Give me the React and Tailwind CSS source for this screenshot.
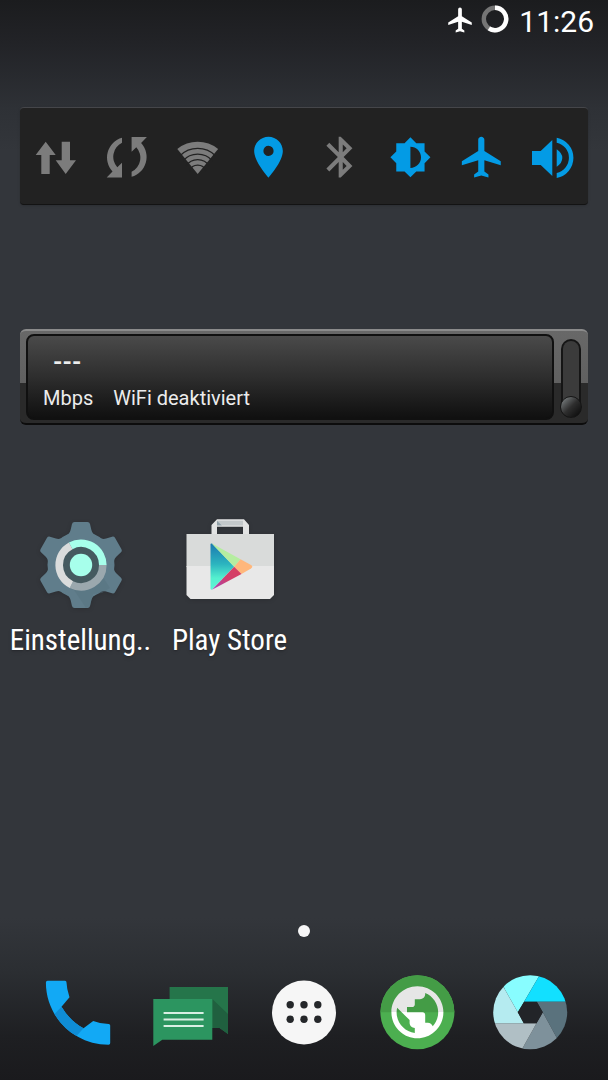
import React, { useState } from "react";

const PLANE =
  "M21 16v-2l-8-5V3.5c0-.83-.67-1.5-1.5-1.5S10 2.67 10 3.5V9l-8 5v2l8-2.5V19l-2 1.5V22l3.5-1 3.5 1v-1.5L13 19v-5.5l8 2.5z";

const SYNC_ARC = "M17 2.8A20.5 20.5 0 0 0 7.5 36.5L1.7 42.5H17V27.8L12.3 32.3A15.6 15.6 0 0 1 17 7.8z";

/* Power control toggles */
const toggles = [
  {
    id: "data",
    label: "Mobile Daten",
    on: false,
    viewBox: "0 0 43 43",
    art: <path d="M11.7 6.7L21.7 20H15.7V39H7.3V20H1.7zM27.7 6.7H36V25.3H42L31.7 39L21.7 25.3H27.7z" />,
  },
  {
    id: "sync",
    label: "Synchronisierung",
    on: false,
    viewBox: "0 0 43 43",
    art: (
      <>
        <path d={SYNC_ARC} />
        <path d={SYNC_ARC} transform="rotate(180 21.8 22.3)" />
      </>
    ),
  },
  {
    id: "wifi",
    label: "WiFi",
    on: false,
    viewBox: "0 0 43 43",
    art: (
      <>
        <path d="M21.7 39L1.3 14A32.3 32.3 0 0 1 42.1 14z" />
        <g fill="none" stroke="#222222" strokeWidth="1.3">
          <path d="M4 20.7A25.2 25.2 0 0 1 39.4 20.7" />
          <path d="M7 25.8A19.6 19.6 0 0 1 36.4 25.8" />
          <path d="M10 31A14 14 0 0 1 33.4 31" />
          <path d="M13.7 36A8.4 8.4 0 0 1 29.7 36" />
        </g>
      </>
    ),
  },
  {
    id: "location",
    label: "Standort",
    on: true,
    viewBox: "1.5 1.2 21 21",
    art: (
      <path d="M12 2C8.13 2 5 5.13 5 9c0 5.25 7 13 7 13s7-7.75 7-13c0-3.87-3.13-7-7-7zm0 9.5a2.5 2.5 0 1 1 0-5 2.5 2.5 0 0 1 0 5z" />
    ),
  },
  {
    id: "bluetooth",
    label: "Bluetooth",
    on: false,
    viewBox: "0.9 1.2 21 21",
    art: (
      <path d="M17.71 7.71L12 2h-1v7.59L6.41 5 5 6.41 10.59 12 5 17.59 6.41 19 11 14.41V22h1l5.71-5.71-4.3-4.29 4.3-4.29zM13 5.83l1.88 1.88L13 9.59V5.83zm1.88 10.46L13 18.17v-3.76l1.88 1.88z" />
    ),
  },
  {
    id: "brightness",
    label: "Helligkeit",
    on: true,
    viewBox: "-0.1 -0.6 24.3 24.3",
    art: (
      <path d="M20 15.31L23.31 12 20 8.69V4h-4.69L12 .69 8.69 4H4v4.69L.69 12 4 15.31V20h4.69L12 23.31 15.31 20H20v-4.69zM12 18V6c3.31 0 6 2.69 6 6s-2.69 6-6 6z" />
    ),
  },
  {
    id: "airplane",
    label: "Flugmodus",
    on: true,
    viewBox: "1.1 1.2 21 21",
    art: <path d={PLANE} />,
  },
  {
    id: "sound",
    label: "Ton",
    on: true,
    viewBox: "0 0 43 43",
    art: (
      <path d="M1 16H9.7L21.3 5V41L9.7 30H1zM25.7 14.3Q31.3 18 31.3 23Q31.3 28 25.7 31.7zM25.7 2.7A20.5 20.5 0 0 1 25.7 43V38A15.5 15.5 0 0 0 25.7 7.7z" />
    ),
  },
];

const StatusBar = () => (
  <header className="flex h-11 items-center justify-end pr-3.5 text-white">
    <svg viewBox="1 1.5 21 21" className="mr-2 mb-1 h-[26px] w-[26px]" fill="currentColor" aria-hidden="true">
      <path d={PLANE} />
    </svg>
    <svg viewBox="0 0 28 28" className="mr-2.5 mb-1.5 h-7 w-7" fill="none" strokeWidth="4.4" aria-hidden="true">
      <circle cx="14" cy="14" r="11.2" stroke="#757575" />
      <path d="M14 2.8A11.2 11.2 0 1 1 7.9 23.4" stroke="#ffffff" />
    </svg>
    <time className="text-[30px] leading-none">11:26</time>
  </header>
);

const PowerWidget = () => {
  const [active, setActive] = useState(toggles.filter((t) => t.on).map((t) => t.id));

  const toggle = (id) =>
    setActive((prev) => (prev.includes(id) ? prev.filter((x) => x !== id) : [...prev, id]));

  return (
    <section className="mx-5 mt-[63px] grid h-[98px] grid-cols-8 rounded-sm border-t border-b border-t-[#45464a] border-b-[#131313] bg-[#222222] shadow-sm">
      {toggles.map((t) => (
        <button
          key={t.id}
          type="button"
          aria-label={t.label}
          aria-pressed={active.includes(t.id)}
          onClick={() => toggle(t.id)}
          className={`flex items-center justify-center ${
            active.includes(t.id) ? "text-[#039be5]" : "text-[#7c7c7c]"
          }`}
        >
          <svg viewBox={t.viewBox} className="h-[43px] w-[43px]" fill="currentColor">
            {t.art}
          </svg>
        </button>
      ))}
    </section>
  );
};

const SpeedWidget = () => (
  <section className="mx-5 mt-[124px] flex h-24 rounded-md border-t-2 border-b-2 border-t-[#8b8b8b] border-b-[#0c0c0c] bg-linear-to-b from-[#686868] from-0% via-[#606060] via-57% to-[#2a2a2a] to-57% py-[3px] pr-[7px] pl-1.5">
    <div className="flex flex-1 flex-col justify-between rounded-lg border-2 border-[#101010] bg-linear-to-b from-[#4a4a4a] via-[#2e2e2e] to-[#101010] px-[15px] pt-3.5 pb-2 text-[#ececec]">
      <p className="px-2.5 text-2xl leading-6 font-bold">---</p>
      <p className="flex gap-5 text-xl leading-6">
        <span>Mbps</span>
        <span>WiFi deaktiviert</span>
      </p>
    </div>
    <div className="mt-[5px] mb-0.5 ml-[7px] flex w-5 flex-col justify-end rounded-full border-2 border-b-0 border-[#151515] bg-[#3b3b3b]">
      <button
        type="button"
        aria-label="Messung starten"
        className="-mx-[3px] h-[22px] rounded-full border border-[#151515] bg-linear-to-br from-[#8a9092] via-[#2e2e2e] to-[#080808]"
      />
    </div>
  </section>
);

const SettingsIcon = () => (
  <svg viewBox="0 -2 90 92" className="h-[92px] w-[90px] drop-shadow-sm">
    <g fill="#607d8b">
      <circle cx="45" cy="45" r="33.5" />
      {[0, 60, 120, 180, 240, 300].map((deg) => (
        <path
          key={deg}
          d="M28 17Q33.6 14.5 34.6 10L36 4Q36.5 2 38.5 2H51.5Q53.5 2 54 4L55.4 10Q56.4 14.5 62 17L45 40z"
          transform={`rotate(${deg} 45 45)`}
        />
      ))}
    </g>
    <path d="M57 68L67 57L74 68L66 73L57 74L54 86L50 88L36 67z" fill="#56707d" opacity="0.4" />
    <circle cx="45" cy="45" r="19" fill="#455a60" />
    <g fill="none" strokeWidth="7.6">
      <path d="M34.7 25.8A21.8 21.8 0 0 1 66.8 45" stroke="#a7ffeb" />
      <path d="M66.8 45A21.8 21.8 0 0 1 35.4 64.6" stroke="#9ba8ae" />
      <path d="M35.4 64.6A21.8 21.8 0 0 1 34.7 25.8" stroke="#dadcdc" />
    </g>
    <circle cx="45" cy="45" r="11.2" fill="#a7ffeb" />
  </svg>
);

const PlayStoreIcon = () => (
  <svg viewBox="0 -2 90 92" className="h-[92px] w-[90px] drop-shadow-sm">
    <defs>
      <linearGradient id="playTeal" x1="0" y1="0" x2="0" y2="1">
        <stop offset="0" stopColor="#1b78b0" />
        <stop offset="0.45" stopColor="#2cb5bf" />
        <stop offset="0.75" stopColor="#54f0cf" />
        <stop offset="1" stopColor="#5ef5d5" />
      </linearGradient>
      <linearGradient id="playRed" x1="0" y1="1" x2="1" y2="0">
        <stop offset="0" stopColor="#a044c0" />
        <stop offset="0.5" stopColor="#d23f6b" />
        <stop offset="1" stopColor="#d83f60" />
      </linearGradient>
    </defs>
    <path d="M26.5 14V5L32 -.7H59L64 5V14H58V6.7H32V14z" fill="#e2e3e3" />
    <path d="M32 .8H58V5.5H37z" fill="#c3c8ca" />
    <path d="M32 .8L37 5.5H32z" fill="#90a0a8" />
    <path d="M1.5 14H89V47H1.5z" fill="#d9dbda" />
    <path d="M1.5 46H89V75L85 79H5.5L1.5 75z" fill="#e8e8e8" />
    <path d="M25.5 24.5Q25.5 23 27 23.5L49.2 46.7L27 69.5Q25.5 70 25.5 68.5z" fill="url(#playTeal)" />
    <path d="M26.5 23.3L55.5 39.3L49.2 46.7z" fill="#b5eda0" />
    <path d="M55.5 39.3L66 45Q68.6 46.7 66 48.5L56.5 54L49.2 46.7z" fill="#ffb77c" />
    <path d="M49.2 46.7L56.5 54L27 69.8z" fill="url(#playRed)" />
  </svg>
);

const apps = [
  { name: "Einstellung..", icon: <SettingsIcon /> },
  { name: "Play Store", icon: <PlayStoreIcon /> },
];

const PhoneIcon = () => (
  <svg viewBox="0 0 76 76" className="h-[76px] w-[76px]">
    <path
      d="M8.5 5.7H26Q27.5 5.7 27.5 7.5Q27.7 14 30.5 22.3L22.5 31.7Q31 46 44.5 53.3L54.2 46Q61 48.8 69.7 49Q71.2 49 71.2 50.5V68Q71.2 69.7 69.5 69.7C35 69.7 6.9 42 6.9 7.5Q6.9 5.7 8.5 5.7z"
      fill="#12a9f5"
    />
    <path d="M22.5 31.7Q31 46 44.5 53.3L37.5 61.1Q24 53.5 15.6 39z" fill="#0f8dd6" />
  </svg>
);

const MessagesIcon = () => (
  <svg viewBox="0 0 76 76" className="h-[76px] w-[76px]">
    <path d="M17.6 12H76V59L67.6 53H17.6z" fill="#25754a" />
    <path d="M60.3 24L76 39V59L67.6 53H60.3z" fill="#20603f" />
    <path d="M1.3 24H60.3V64.7H10.3L1.3 71z" fill="#2c9560" />
    <path d="M11.6 38H51.6M11.6 44.4H51.6M11.6 51H51.6" stroke="#d9efe4" strokeWidth="2" />
  </svg>
);

const DrawerIcon = () => (
  <svg viewBox="0 0 76 76" className="h-[76px] w-[76px]">
    <circle cx="38" cy="37.5" r="32" fill="#f6f6f6" />
    {[29.7, 44.3].map((y) =>
      [24.2, 38, 51.8].map((x) => <circle key={`${x}-${y}`} cx={x} cy={y} r="3.7" fill="#25272a" />)
    )}
  </svg>
);

const BrowserIcon = () => (
  <svg viewBox="0 0 76 76" className="h-[76px] w-[76px]">
    <defs>
      <linearGradient id="globeHalf" x1="0" y1="0" x2="0" y2="1">
        <stop offset="0.5" stopColor="#e6e6e6" />
        <stop offset="0.5" stopColor="#ffffff" />
      </linearGradient>
    </defs>
    <circle cx="37.4" cy="37.3" r="37" fill="#4caf50" />
    <path d="M.4 37.3a37 37 0 0 1 74 0z" fill="#449c46" />
    <path
      transform="translate(6.2 6.1) scale(2.6)"
      fill="url(#globeHalf)"
      d="M12 2C6.48 2 2 6.48 2 12s4.48 10 10 10 10-4.48 10-10S17.52 2 12 2zm-1 17.93c-3.95-.49-7-3.85-7-7.93 0-.62.08-1.21.21-1.79L9 15v1c0 1.1.9 2 2 2v1.93zm6.9-2.54c-.26-.81-1-1.39-1.9-1.39h-1v-3c0-.55-.45-1-1-1H8v-2h2c.55 0 1-.45 1-1V7h2c1.1 0 2-.9 2-2v-.41c2.93 1.19 5 4.06 5 7.41 0 2.08-.8 3.97-2.1 5.39z"
    />
  </svg>
);

const CameraIcon = () => (
  <svg viewBox="0 0 76 76" className="h-[76px] w-[76px]">
    <defs>
      <clipPath id="lens">
        <circle cx="37.2" cy="37.3" r="37" />
      </clipPath>
    </defs>
    <g clipPath="url(#lens)">
      <path d="M24.8 37.3L11.8 14.3L6 0H46.7L31.1 26.7z" fill="#88fdff" />
      <path d="M31.1 26.7L46.7 0H76V26.7z" fill="#12e0ff" />
      <path d="M43.8 26.7H76V76H71L49.8 37.3z" fill="#5a727d" />
      <path d="M49.8 37.3L71 76H28L43.5 48.3z" fill="#7e919b" />
      <path d="M43.5 48.3L28 76H0V48.3z" fill="#b0bfc5" />
      <path d="M30.8 48.3H-1V0H3.7L24.8 37.3z" fill="#b5ebf0" />
    </g>
    <path d="M31.1 26.7H43.8L49.8 37.3L43.5 48.3H30.8L24.8 37.3z" fill="#222428" />
  </svg>
);

const dock = [
  { name: "Telefon", icon: <PhoneIcon /> },
  { name: "Nachrichten", icon: <MessagesIcon /> },
  { name: "Apps", icon: <DrawerIcon /> },
  { name: "Browser", icon: <BrowserIcon /> },
  { name: "Kamera", icon: <CameraIcon /> },
];

const App = () => {
  return (
    <div className="flex min-h-screen flex-col bg-[linear-gradient(to_bottom,#1b1c1e_0%,#222327_4%,#2e3136_10%,#33363b_14%,#33363b_85%,#2b2e32_90%,#1e1f22_96%,#1a1a1d_100%)] font-[Roboto,sans-serif]">
      <StatusBar />
      <main className="flex flex-1 flex-col">
        <PowerWidget />
        <SpeedWidget />

        {/* App shortcuts */}
        <div className="mt-[93px] grid grid-cols-4 px-1.5">
          {apps.map((app) => (
            <button key={app.name} type="button" className="flex flex-col items-center">
              {app.icon}
              <span className="mt-3 font-['Roboto_Condensed','Liberation_Sans_Narrow',Roboto,sans-serif] text-[29px] leading-9 whitespace-nowrap text-white text-shadow-md">
                {app.name}
              </span>
            </button>
          ))}
        </div>
      </main>

      <footer>
        {/* Page indicator */}
        <div className="mx-auto h-3 w-3 rounded-full bg-[#f6f6f6]" />
        <nav className="mt-[38px] mb-[29px] grid grid-cols-5 px-5">
          {dock.map((item) => (
            <button key={item.name} type="button" aria-label={item.name} className="flex justify-center">
              {item.icon}
            </button>
          ))}
        </nav>
      </footer>
    </div>
  );
};

export default App;
